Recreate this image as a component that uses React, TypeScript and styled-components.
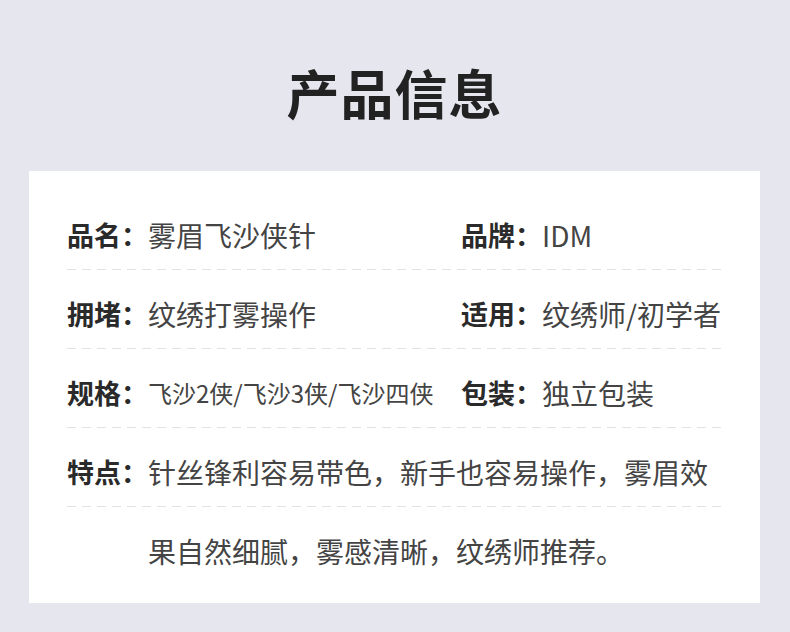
import styled, { createGlobalStyle } from 'styled-components'

const GlobalStyle = createGlobalStyle`
  html, body {
    margin: 0;
    padding: 0;
    background: #e5e6ee;
  }
  body {
    font-family: 'Noto Sans CJK SC', 'Noto Sans', sans-serif;
  }
`

type Field = { label: string; value: string; small?: boolean }

const rows: { cells: Field[]; divider: boolean; continuation?: boolean }[] = [
  {
    cells: [
      { label: '品名：', value: '雾眉飞沙侠针' },
      { label: '品牌：', value: 'IDM' },
    ],
    divider: true,
  },
  {
    cells: [
      { label: '拥堵：', value: '纹绣打雾操作' },
      { label: '适用：', value: '纹绣师/初学者' },
    ],
    divider: true,
  },
  {
    cells: [
      { label: '规格：', value: '飞沙2侠/飞沙3侠/飞沙四侠', small: true },
      { label: '包装：', value: '独立包装' },
    ],
    divider: true,
  },
  {
    cells: [{ label: '特点：', value: '针丝锋利容易带色，新手也容易操作，雾眉效' }],
    divider: true,
  },
  {
    cells: [{ label: '', value: '果自然细腻，雾感清晰，纹绣师推荐。' }],
    divider: false,
    continuation: true,
  },
]

export default function App() {
  return (
    <Page lang="zh-CN">
      <GlobalStyle />
      <Title>产品信息</Title>
      <Card>
        {rows.map((row, i) => (
          <Row key={i} $divider={row.divider}>
            {row.cells.length === 2 ? (
              row.cells.map((c) => (
                <Cell key={c.label}>
                  <Label>{c.label}</Label>
                  <Value $small={c.small}>{c.value}</Value>
                </Cell>
              ))
            ) : (
              <WideCell $indent={row.continuation}>
                {row.cells[0].label && <Label>{row.cells[0].label}</Label>}
                <Value>{row.cells[0].value}</Value>
              </WideCell>
            )}
          </Row>
        ))}
      </Card>
    </Page>
  )
}

const Page = styled.div`
  width: 790px;
  height: 632px;
  overflow: hidden;
  display: flex;
  flex-direction: column;
  padding: 62px 0 0 29px;
  box-sizing: border-box;
`

const Title = styled.h1`
  width: 731px;
  text-align: center;
  margin: 0 0 49px;
  height: 60px;
  line-height: 60px;
  font-size: 53px;
  font-weight: 700;
  color: #222;
  letter-spacing: 1px;
`

const Card = styled.div`
  width: 731px;
  box-sizing: border-box;
  background: #fff;
  padding: 20px 38px 17px 38px;
  display: flex;
  flex-direction: column;
`

const Row = styled.div<{ $divider: boolean }>`
  height: 79px;
  box-sizing: border-box;
  padding-top: 8px;
  display: grid;
  grid-template-columns: 394px 1fr;
  align-items: center;
  background-image: ${(p) =>
    p.$divider
      ? 'repeating-linear-gradient(to right, #e2e2e2 0 9px, transparent 9px 15px)'
      : 'none'};
  background-size: 100% 1px;
  background-position: left bottom;
  background-repeat: no-repeat;
`

const Cell = styled.div`
  display: flex;
  align-items: center;
  white-space: nowrap;
`

const WideCell = styled.div<{ $indent?: boolean }>`
  grid-column: 1 / span 2;
  display: flex;
  align-items: center;
  white-space: nowrap;
  padding-left: ${(p) => (p.$indent ? '81px' : '0')};
`

const Label = styled.span`
  font-size: 27px;
  font-weight: 700;
  color: #2a2a2a;
  line-height: 36px;
`

const Value = styled.span<{ $small?: boolean }>`
  font-size: ${(p) => (p.$small ? '24px' : '28px')};
  font-weight: 400;
  color: #444;
  line-height: 36px;
`
